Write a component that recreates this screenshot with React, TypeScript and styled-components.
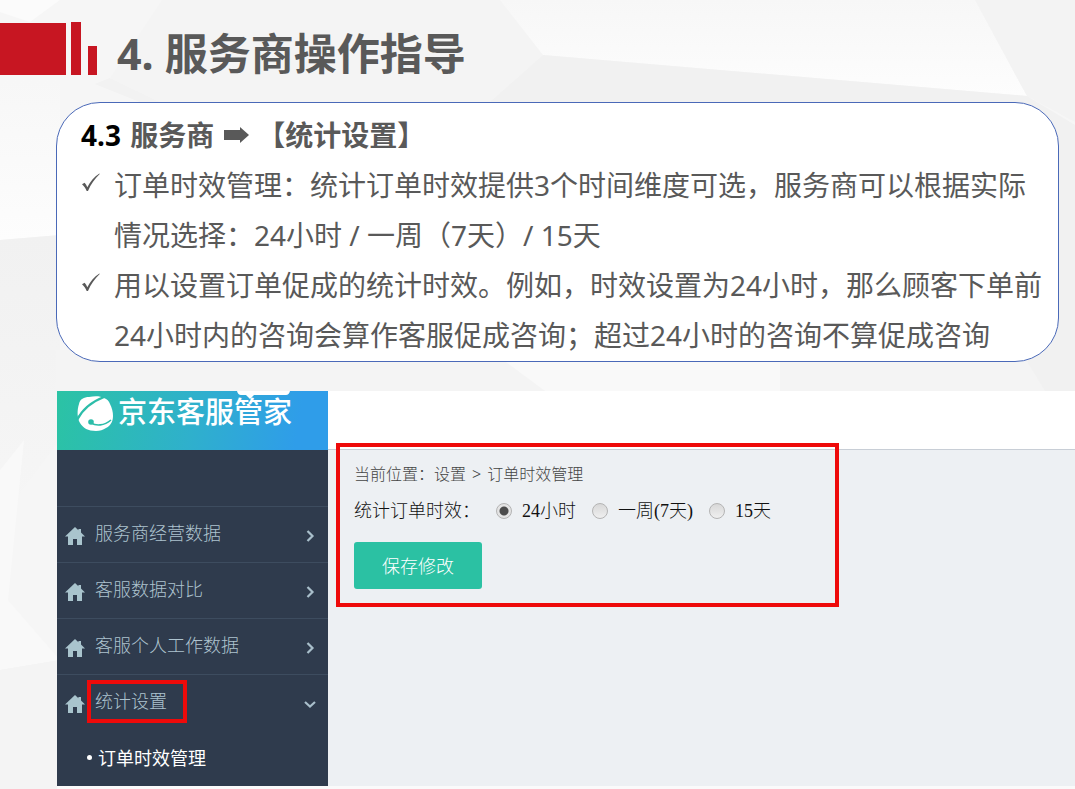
import React, { useState } from "react";
import styled, { createGlobalStyle } from "styled-components";

const GlobalStyle = createGlobalStyle`
  * { box-sizing: border-box; }
  body {
    margin: 0;
    background: #f5f5f5;
    font-family: "Noto Sans", "Noto Sans CJK SC", sans-serif;
    color: #595959;
  }
  h1, h2, p, ul { margin: 0; padding: 0; }
  ul { list-style: none; }
`;

const Page = styled.div`
  position: relative;
  min-height: 100vh;
  padding-bottom: 3px;
  overflow: hidden;
`;

const Backdrop = styled.svg`
  position: absolute;
  inset: 0;
  width: 100%;
  height: 100%;
  z-index: -1;
`;

const Header = styled.header`
  display: flex;
  align-items: flex-end;
  height: 75px;
`;

const Stripe = styled.span<{ $w: number; $h: number; $gap: number }>`
  flex: none;
  width: ${(p) => p.$w}px;
  height: ${(p) => p.$h}px;
  margin-right: ${(p) => p.$gap}px;
  background: #c71622;
`;

const Title = styled.h1`
  font-size: 43px;
  line-height: 42px;
  font-weight: 700;
  white-space: nowrap;
`;

const Card = styled.section`
  margin: 27px 16px 0 56px;
  padding: 7px 8px 1px 24px;
  border: 1px solid #4a69b8;
  border-radius: 44px;
  background: #fff;
`;

const CardTitle = styled.h2`
  display: flex;
  align-items: center;
  font-size: 28px;
  line-height: 50px;
  font-weight: 700;
  white-space: pre;
`;

const Num = styled.span`
  margin-right: 2px;
  color: #000;
`;

const ArrowIcon = styled.svg`
  width: 25px;
  height: 18px;
  margin: 0 8px 0 10px;
`;

const Point = styled.li`
  display: flex;
  font-size: 28px;
  line-height: 50px;
`;

const Tick = styled.svg`
  flex: none;
  width: 20px;
  height: 20px;
  margin: 13px 13px 0 0;
`;

const AppShot = styled.section`
  display: flex;
  margin: 29px 0 0 57px;
  background: #edf0f3;
`;

const Sidebar = styled.aside`
  flex: none;
  width: 271px;
  background: #2f3b4d;
`;

const Brand = styled.div`
  position: relative;
  display: flex;
  height: 59px;
  padding: 4px 0 0 19px;
  background: linear-gradient(100deg, #2bc3a4 0%, #2fb0cc 50%, #2f9de9 88%);
  overflow: hidden;
`;

const BrandName = styled.span`
  margin-left: 4px;
  font-size: 29px;
  line-height: 34px;
  font-weight: 500;
  color: #fff;
  white-space: nowrap;
`;

const Bubble = styled.svg`
  position: absolute;
  left: 180px;
  top: 0;
  width: 53px;
  height: 8px;
`;

const Nav = styled.nav`
  padding-top: 56px;
`;

const NavLink = styled.a`
  display: flex;
  align-items: center;
  height: 56px;
  padding: 2px 12px 0 8px;
  border-top: 1px solid #3d4c5f;
  color: #adc3cf;
  font-size: 18px;
  font-weight: 300;
  line-height: 27px;
  text-decoration: none;
`;

const NavText = styled.span<{ $marked?: boolean }>`
  margin: 0 0 4px 10px;
  padding-right: 12px;
  ${(p) => p.$marked && "outline: 4px solid #ee0a0a; outline-offset: 4px;"}
`;

const Chevron = styled.svg`
  width: 12px;
  height: 12px;
  margin-left: auto;
`;

const SubLink = styled.a`
  display: flex;
  align-items: center;
  height: 56px;
  padding: 0 0 2px 30px;
  gap: 6px;
  color: #fff;
  font-size: 18px;
  font-weight: 400;
  text-decoration: none;
`;

const Dot = styled.span`
  width: 5px;
  height: 5px;
  border-radius: 50%;
  background: #fff;
`;

const Main = styled.main`
  flex: 1;
  min-width: 0;
`;

const TopBar = styled.div`
  height: 59px;
  background: #fff;
  border-bottom: 1px solid #c8ced6;
`;

const Callout = styled.div`
  position: relative;
  width: 503px;
  max-width: 100%;
  margin: -7px 0 0 8px;
  padding: 15px 14px 14px;
  border: 4px solid #ee0a0a;
`;

const Crumbs = styled.p`
  display: flex;
  gap: 6px;
  font-size: 16px;
  line-height: 24px;
  font-weight: 300;
  color: #444;
`;

const Crumb = styled.span`
  white-space: nowrap;
`;

const Form = styled.form`
  margin-top: 12px;
`;

const Options = styled.fieldset`
  display: flex;
  align-items: center;
  margin: 0;
  padding: 0;
  border: 0;
  gap: 16px;
  font-family: "Liberation Serif", "Noto Sans CJK SC", serif;
  font-size: 18px;
  line-height: 26px;
  font-weight: 300;
  color: #111;
  white-space: nowrap;
`;

const Option = styled.label`
  display: flex;
  align-items: center;
  gap: 10px;
`;

const Radio = styled.input`
  appearance: none;
  width: 16px;
  height: 16px;
  margin: 0;
  border: 1px solid #b4b4b4;
  border-radius: 50%;
  background: linear-gradient(#d8d8d8, #efefef);
  &:checked {
    background: radial-gradient(circle, #4c4c4c 0 4px, #e4e4e4 5px);
  }
`;

const Save = styled.button`
  display: block;
  width: 128px;
  height: 47px;
  margin-top: 18px;
  padding: 0 0 2px;
  border: 0;
  border-radius: 3px;
  background: #2bc1a3;
  color: #fff;
  font-family: inherit;
  font-size: 18px;
  font-weight: 300;
`;

const House = () => (
  <svg width="20" height="18" viewBox="0 0 20 18" fill="#a9c4cd" aria-hidden="true">
    <path d="M10 0 0 9.600h3V18h5v-6h4v6h5V9.600h3L16 5.600V2h-2.600v1.200z" />
  </svg>
);

const TickMark = () => (
  <Tick viewBox="0 0 20 20" fill="#595959" aria-hidden="true">
    <path d="M1 11.200 3.600 9.800C4.800 11 5.600 12.600 6.300 14.300 9.200 8.600 13 4.200 18.400.600L18.700 1C13.700 5.600 9.900 11.100 7 18H5.700C4.500 15.200 3.100 12.900 1 11.200z" />
  </Tick>
);

const Logo = () => (
  <svg width="38" height="37" viewBox="0 0 38 37" aria-hidden="true">
    <path
      fill="#fff"
      d="M3 9C4 4 8 2 13 2 19 1 24 1 28 3c3 1 5 3 6 6 2 4 3 8 3 12 0 6-3 10-7 12-3 2-6 3-10 3C12 36 7 33 4 28 1 23 1 15 3 9z"
    />
    <path fill="none" stroke="#2cbda9" strokeWidth="2.200" d="M1 25C6 15 15 7 28 2" />
    <circle cx="15" cy="27" r="2.800" fill="#2cbda9" />
    <path fill="none" stroke="#2cbda9" strokeWidth="1.600" d="M15 28c5 3 13 3 20-3" />
  </svg>
);

const menu = [
  { text: "服务商经营数据" },
  { text: "客服数据对比" },
  { text: "客服个人工作数据" },
  { text: "统计设置", open: true },
];

const periods = ["24小时", "一周(7天)", "15天"];

export default function App() {
  const [period, setPeriod] = useState(periods[0]);

  return (
    <Page>
      <GlobalStyle />
      <Backdrop viewBox="0 0 1075 789" preserveAspectRatio="none" aria-hidden="true">
        <defs>
          <linearGradient id="sheen" x1="0" y1="0" x2="0" y2="1">
            <stop offset="0" stopColor="#f7f7f7" />
            <stop offset="1" stopColor="#fdfdfd" />
          </linearGradient>
          <linearGradient id="fade" x1="0" y1="0" x2="0" y2="1">
            <stop offset="0" stopColor="#f1f1f1" />
            <stop offset="1" stopColor="#f6f6f6" />
          </linearGradient>
        </defs>
        <path fill="#f6f6f6" d="M0 0H1075V789H0z" />
        <path fill="#fbfbfb" d="M0 0H60L30 22 0 12z" />
        <path fill="#f2f2f2" d="M95 84 140 102H160L110 78z" />
        <path fill="#f4f4f4" d="M162 0 110 78 160 102H490L543 55 520 0z" />
        <path fill="url(#sheen)" d="M500 0H975L1027 96 543 55z" />
        <path fill="#f1f1f1" d="M543 55 1027 96 1075 125V400H490V102z" />
        <path fill="#f3f3f3" d="M975 0H1075V122L1027 96z" />
        <path fill="url(#sheen)" d="M0 80H60V235L0 240z" />
        <path fill="url(#fade)" d="M0 240 60 235V440L0 520z" />
        <path fill="#f4f4f4" d="M56 350H498L545 391H56z" />
        <path fill="#f9f9f9" d="M490 350H780V391H545z" />
        <path fill="#f4f4f4" d="M780 350H1020L1045 391H780z" />
        <path fill="#f9f9f9" d="M0 470 24 440 8 600 60 660 0 670z" />
        <path fill="#f4f4f4" d="M0 670 60 660V789H0z" />
        <path fill="#fafafa" d="M57 786H1075V789H57z" />
      </Backdrop>

      <Header>
        <Stripe $w={66} $h={52} $gap={5} />
        <Stripe $w={10} $h={53} $gap={7} />
        <Stripe $w={9} $h={29} $gap={20} />
        <Title>4. 服务商操作指导</Title>
      </Header>

      <Card>
        <CardTitle>
          <Num>4.3 </Num>服务商
          <ArrowIcon viewBox="0 0 25 18" fill="#595959" role="img" aria-label="到">
            <path d="M0 4H16V1L25 9 16 17V14H0z" />
          </ArrowIcon>
          【统计设置】
        </CardTitle>
        <ul>
          <Point>
            <TickMark />
            <p>
              订单时效管理：统计订单时效提供3个时间维度可选，服务商可以根据实际
              <br />
              情况选择：24小时 / 一周（7天）/ 15天
            </p>
          </Point>
          <Point>
            <TickMark />
            <p>
              用以设置订单促成的统计时效。例如，时效设置为24小时，那么顾客下单前
              <br />
              24小时内的咨询会算作客服促成咨询；超过24小时的咨询不算促成咨询
            </p>
          </Point>
        </ul>
      </Card>

      <AppShot>
        <Sidebar>
          <Brand>
            <Logo />
            <BrandName>京东客服管家</BrandName>
            <Bubble viewBox="0 0 53 8" fill="#fff" aria-hidden="true">
              <path d="M0 0H53Q52 4 49 4H17L13 8 9 4H4Q1 4 0 0z" />
            </Bubble>
          </Brand>
          <Nav>
            {menu.map((item) => (
              <NavLink href="#" key={item.text}>
                <House />
                <NavText $marked={item.open}>{item.text}</NavText>
                <Chevron viewBox="0 0 12 12" fill="none" stroke="#a9bfcb" strokeWidth="2.200">
                  <path d={item.open ? "M1 4 6 8.500 11 4" : "M3.500 1 8.500 6 3.500 11"} />
                </Chevron>
              </NavLink>
            ))}
            <SubLink href="#">
              <Dot />
              订单时效管理
            </SubLink>
          </Nav>
        </Sidebar>
        <Main>
          <TopBar />
          <Callout>
            <Crumbs>
              <Crumb>当前位置：设置</Crumb>
              <Crumb>&gt;</Crumb>
              <Crumb>订单时效管理</Crumb>
            </Crumbs>
            <Form onSubmit={(e) => e.preventDefault()}>
              <Options aria-label="统计订单时效">
                <span>统计订单时效：</span>
                {periods.map((p) => (
                  <Option key={p}>
                    <Radio
                      type="radio"
                      name="period"
                      value={p}
                      checked={period === p}
                      onChange={() => setPeriod(p)}
                    />
                    {p}
                  </Option>
                ))}
              </Options>
              <Save type="submit">保存修改</Save>
            </Form>
          </Callout>
        </Main>
      </AppShot>
    </Page>
  );
}
